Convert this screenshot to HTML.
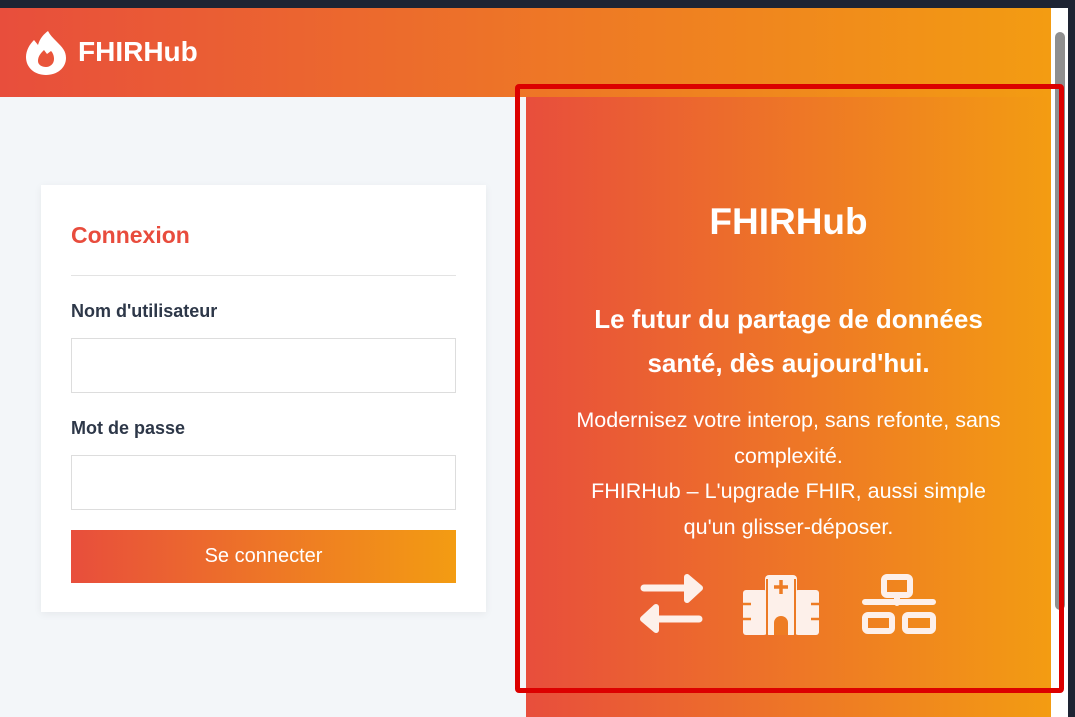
<!DOCTYPE html>
<html><head><meta charset="utf-8"><style>
*{margin:0;padding:0;box-sizing:border-box}
body{width:1075px;height:717px;overflow:hidden;background:#f3f6f9;font-family:"Liberation Sans",Arial,sans-serif;position:relative}
.top{position:absolute;left:0;top:0;width:1075px;height:8px;background:#1e2433}
.frame{position:absolute;right:0;top:0;width:7px;height:717px;background:#1e2433}
.sb{position:absolute;left:1051px;top:8px;width:17px;height:709px;background:#fff}
.thumb{position:absolute;left:1055px;top:32px;width:10px;height:578px;background:#8f8f8f;border-radius:5px}
.hdr{position:absolute;left:0;top:8px;width:1051px;height:89px;background:linear-gradient(90deg,#e84e3c,#f39c12)}
.hdr .t{position:absolute;left:78px;top:28px;color:#fff;font-weight:bold;font-size:28px}
.card{position:absolute;left:41px;top:185px;width:445px;height:427px;background:#fff;box-shadow:0 2px 8px rgba(0,0,0,.06)}
.card h2{position:absolute;left:30px;top:37px;color:#e84c3d;font-size:23px;font-weight:bold}
.hr{position:absolute;left:30px;top:90px;width:385px;height:1px;background:#e3e3e3}
.lbl{position:absolute;left:30px;color:#2d3748;font-size:18px;font-weight:bold}
.inp{position:absolute;left:30px;width:385px;height:55px;border:1px solid #ddd}
.btn{position:absolute;left:30px;top:345px;width:385px;height:53px;background:linear-gradient(90deg,#e84e3c,#f39c12);color:#fff;font-size:20px;text-align:center;line-height:53px}
.pan{position:absolute;left:526px;top:97px;width:525px;height:620px;background:linear-gradient(90deg,#e84e3c,#f39c12);color:#fff;text-align:center}
.box{position:absolute;left:515px;top:84px;width:549px;height:609px;border:5px solid #dc0000;border-radius:4px;z-index:5}
.pan h1{position:absolute;left:0;width:525px;top:104px;font-size:37px}
.pan .h{position:absolute;left:40px;width:445px;top:200px;font-size:26px;font-weight:bold;line-height:44px}
.pan .b{position:absolute;left:35px;width:455px;top:306px;font-size:21.5px;line-height:35.5px}
</style></head><body>
<div class="top"></div>
<div class="hdr">
<svg style="position:absolute;left:25px;top:22px" width="42" height="46" viewBox="0 0 42 46"><path d="M21 45C10 45 1 38 1 27 1 20 5 14 9 10l4 5C15 8 19 4 23 1c2 4 5 7 9 11 5 5 9 9 9 16 0 10-9 17-20 17z" fill="#fff"/><path d="M13 31c0-5 3-8 6-11l3 4 4-3c2 2 3 5 3 8 0 5-4 8-8 8s-8-2-8-6z" fill="#e9543a"/></svg>
<div class="t">FHIRHub</div></div>
<div class="card"><h2>Connexion</h2><div class="hr"></div>
<div class="lbl" style="top:116px">Nom d'utilisateur</div><div class="inp" style="top:153px"></div>
<div class="lbl" style="top:233px">Mot de passe</div><div class="inp" style="top:270px"></div>
<div class="btn">Se connecter</div></div>
<div class="pan"><h1>FHIRHub</h1>
<div class="h">Le futur du partage de données santé, dès aujourd'hui.</div>
<div class="b">Modernisez votre interop, sans refonte, sans complexité.<br>FHIRHub – L'upgrade FHIR, aussi simple<br>qu'un glisser-déposer.</div>
<svg style="position:absolute;left:114px;top:474px" width="300" height="66" viewBox="0 0 300 66" fill="#fdf0ea">
<path d="M4 17h46" stroke="#fdf0ea" stroke-width="7" stroke-linecap="round"/><path d="M47 6l13 11-13 12z" stroke="#fdf0ea" stroke-width="6" stroke-linejoin="round"/>
<path d="M59 48H14" stroke="#fdf0ea" stroke-width="7" stroke-linecap="round"/><path d="M16 36L3 48l13 11z" stroke="#fdf0ea" stroke-width="6" stroke-linejoin="round"/>
<rect x="103" y="19" width="24" height="45" rx="3"/><rect x="155" y="19" width="24" height="45" rx="3"/>
<rect x="125" y="4" width="32" height="60" rx="4"/>
<path d="M127 8v56M155 8v56" stroke="#ec7a24" stroke-width="2"/>
<path d="M134 64V52a7 7 0 0 1 14 0v12z" fill="#ee7c24"/>
<path d="M141 9v14M134 16h14" stroke="#ee7c24" stroke-width="3.5"/>
<path d="M103 33h8M103 48h8M171 33h8M171 48h8" stroke="#ee7c24" stroke-width="2.5"/>
<rect x="244" y="6" width="26" height="18" rx="3" fill="none" stroke="#fdf0ea" stroke-width="6"/>
<path d="M257 24v8M225 31h68" stroke="#fdf0ea" stroke-width="6" stroke-linecap="round"/>
<rect x="225" y="44" width="27" height="16" rx="3" fill="none" stroke="#fdf0ea" stroke-width="6"/>
<rect x="265" y="44" width="28" height="16" rx="3" fill="none" stroke="#fdf0ea" stroke-width="6"/>
</svg></div>
<div class="sb"></div><div class="thumb"></div><div class="frame"></div>
<div class="box"></div>
</body></html>
